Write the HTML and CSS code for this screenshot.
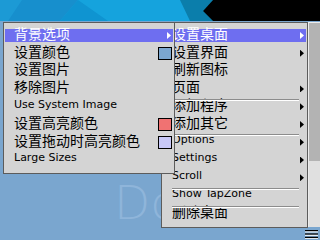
FILE: index.html
```html
<!DOCTYPE html>
<html>
<head>
<meta charset="utf-8">
<link rel="stylesheet" href="styles.css">
</head>
<body>
<div class="screen">
  <header class="banner">
    <svg width="320" height="21" viewBox="0 0 320 21">
      <rect width="320" height="21" fill="#15a3dd"/>
      <polygon points="0,0 78,0 60,21 0,21" fill="#178fcd"/>
      <polygon points="0,0 22,0 8,21 0,21" fill="#1c9ad5"/>
      <polygon points="78,0 60,21 108,21" fill="#0f94d1"/>
      <polygon points="180,0 213,0 203,11 213,21 190,21" fill="#0b7eab"/>
      <polygon points="213,0 320,0 320,21 213,21 203,11" fill="#000"/>
    </svg>
  </header>
  <main class="desk">
    <div class="canvas"><span class="mark">Do</span></div>
    <div class="scroll"><div class="dark"></div><div class="light"></div></div>
  </main>
  <footer class="bar">
    <svg width="13" height="10" viewBox="0 0 13 10">
      <rect x="0" y="1" width="13" height="1.4" fill="#000"/>
      <rect x="0" y="2.4" width="13" height="1" fill="#fff"/>
      <rect x="0" y="4.4" width="13" height="1.4" fill="#000"/>
      <rect x="0" y="5.8" width="13" height="1" fill="#fff"/>
      <rect x="0" y="7.8" width="13" height="1.4" fill="#000"/>
      <rect x="0" y="9.2" width="13" height="0.8" fill="#fff"/>
    </svg>
  </footer>

  <div class="menu main">
    <div class="item sel"><span class="label zh">设置桌面</span><span class="arrow"></span></div>
    <div class="item"><span class="label zh">设置界面</span><span class="arrow"></span></div>
    <div class="item"><span class="label zh">刷新图标</span></div>
    <div class="item"><span class="label zh">页面</span><span class="arrow"></span></div>
    <div class="item sep"><span class="label zh">添加程序</span><span class="arrow"></span></div>
    <div class="item"><span class="label zh">添加其它</span><span class="arrow"></span></div>
    <div class="item sep"><span class="label">Options</span><span class="arrow"></span></div>
    <div class="item"><span class="label">Settings</span><span class="arrow"></span></div>
    <div class="item"><span class="label">Scroll</span><span class="arrow"></span></div>
    <div class="item sep"><span class="label">Show TapZone</span></div>
    <div class="item sep"><span class="label zh">删除桌面</span></div>
  </div>

  <div class="menu sub">
    <div class="item sel"><span class="label zh">背景选项</span><span class="arrow"></span></div>
    <div class="item"><span class="label zh">设置颜色</span><span class="swatch c-blue"></span></div>
    <div class="item"><span class="label zh">设置图片</span></div>
    <div class="item"><span class="label zh">移除图片</span></div>
    <div class="item"><span class="label">Use System Image</span></div>
    <div class="item"><span class="label zh">设置高亮颜色</span><span class="swatch c-red"></span></div>
    <div class="item"><span class="label zh">设置拖动时高亮颜色</span><span class="swatch c-lav"></span></div>
    <div class="item"><span class="label">Large Sizes</span></div>
  </div>
</div>
</body>
</html>
```
FILE: styles.css
```css
* { box-sizing: border-box; }
html, body { margin: 0; padding: 0; }
body {
  width: 320px;
  height: 240px;
  overflow: hidden;
  background: #7aa6cf;
  font-family: "DejaVu Sans", "Noto Sans CJK SC", sans-serif;
}
.screen {
  position: relative;
  width: 320px;
  height: 240px;
  display: flex;
  flex-direction: column;
}
.banner { height: 21px; flex: none; }
.banner svg { display: block; }
.desk { flex: 1; display: flex; min-height: 0; }
.canvas { flex: 1; position: relative; overflow: hidden; }
.mark {
  position: absolute;
  left: 114px;
  top: 158px;
  font-size: 47px;
  line-height: 1;
  font-weight: 200;
  color: #8fb5da;
}
.scroll {
  width: 12px;
  margin-top: 1px;
  display: flex;
  flex-direction: column;
  border-left: 1px solid #ececec;
  border-top: 1px solid #ececec;
}
.scroll .dark { height: 138px; background: #b3b3b3; }
.scroll .light { flex: 1; background: #e0e0e0; }
.bar {
  height: 13px;
  flex: none;
  display: flex;
  justify-content: flex-end;
  align-items: center;
  padding-right: 2px;
}
.bar svg { display: block; }

.menu {
  position: absolute;
  top: 22px;
  background: #d4d4d4;
  border: 1px solid #5c5c5c;
  padding: 3.6px 0;
}
.menu.main { left: 161px; width: 147px; height: 206px; }
.menu.sub { left: 3px; width: 172px; height: 152px; }

.item {
  position: relative;
  height: 17.8px;
  margin: 0 1px;
  border-top: 2px solid transparent;
  border-bottom: 2px solid transparent;
  background-clip: padding-box;
  display: flex;
  align-items: center;
  padding: 0 2px 0 9px;
  color: #000;
  font-size: 11px;
}
.item.sel { background-color: #6e6ef0; color: #fff; }
.label {
  flex: 1;
  line-height: 14px;
  padding-bottom: 4px;
  white-space: nowrap;
}
.label.zh {
  font-family: "Noto Sans CJK SC", sans-serif;
  font-size: 14px;
  padding-bottom: 5.5px;
}
.arrow {
  flex: none;
  width: 4px;
  height: 7px;
  background: currentColor;
  clip-path: polygon(0 0, 100% 50%, 0 100%);
}
.swatch {
  flex: none;
  width: 14px;
  height: 13px;
  border: 1px solid #000;
  margin-right: -1px;
}
.c-blue { background: #7ba7d0; }
.c-red { background: #f07272; }
.c-lav { background: #c8c8f8; }
.sep::before {
  content: "";
  position: absolute;
  left: 9px;
  right: 7px;
  top: -1px;
  height: 2px;
  background: linear-gradient(#8c8c8c 50%, #ffffff 50%);
}
```
